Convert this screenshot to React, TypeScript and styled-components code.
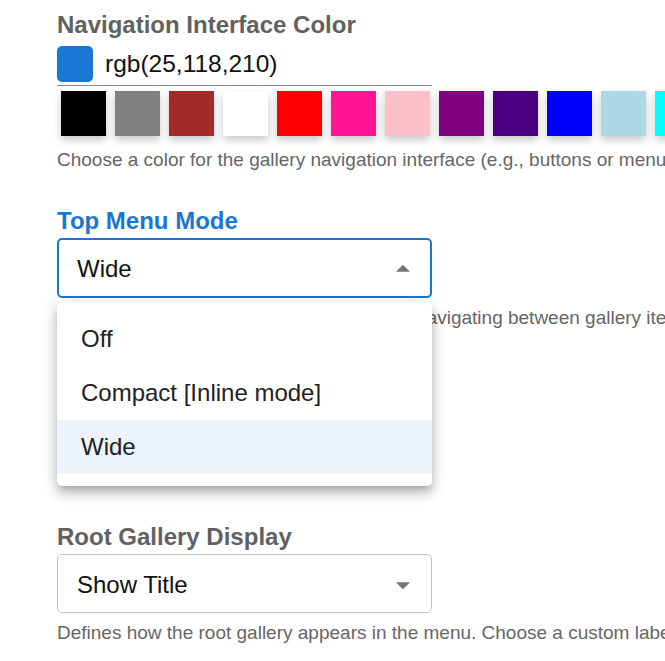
import styled, { createGlobalStyle } from "styled-components";

const GlobalStyle = createGlobalStyle`
  html, body {
    margin: 0;
    padding: 0;
    background: #ffffff;
    overflow: hidden;
  }
  body {
    font-family: "Liberation Sans", Arial, sans-serif;
  }
`;

const Page = styled.div`
  position: relative;
  width: 1000px;
  padding: 13px 0 0 57px;
`;

const Section = styled.section<{ $gap?: number }>`
  display: flex;
  flex-direction: column;
  margin-bottom: ${(p) => p.$gap ?? 0}px;
`;

const Label = styled.div<{ $active?: boolean }>`
  font-size: 24px;
  font-weight: 700;
  line-height: 24px;
  color: ${(p) => (p.$active ? "#1976d2" : "#616161")};
`;

const ColorRow = styled.div`
  display: flex;
  align-items: center;
  gap: 12px;
  margin-top: 9px;
  width: 375px;
  padding-bottom: 3px;
  border-bottom: 1px solid #8a8a8a;
`;

const CurrentColor = styled.div<{ $color: string }>`
  width: 36px;
  height: 36px;
  border-radius: 5px;
  background: ${(p) => p.$color};
`;

const ColorValue = styled.span`
  font-size: 24.5px;
  color: #111111;
`;

const SwatchRow = styled.div`
  display: flex;
  gap: 9px;
  padding: 5px 0 0 4px;
`;

const Swatch = styled.button<{ $color: string }>`
  flex: none;
  width: 45px;
  height: 45px;
  border: none;
  padding: 0;
  background: ${(p) => p.$color};
  box-shadow: 0 4px 8px rgba(0, 0, 0, 0.22);
  cursor: pointer;
`;

const Helper = styled.p<{ $top: number }>`
  margin: ${(p) => p.$top}px 0 0;
  font-size: 19px;
  line-height: 22px;
  color: #666666;
  white-space: nowrap;
`;

const SelectBox = styled.div<{ $focused?: boolean }>`
  box-sizing: border-box;
  width: 375px;
  height: ${(p) => (p.$focused ? 60 : 59)}px;
  margin-top: 5px;
  display: flex;
  align-items: center;
  justify-content: space-between;
  padding: 2px ${(p) => (p.$focused ? 10 : 11)}px 0 ${(p) => (p.$focused ? 18 : 19)}px;
  border: ${(p) => (p.$focused ? "2px solid #1976d2" : "1px solid #c4c4c4")};
  border-radius: 5px;
  font-size: 24px;
  color: #111111;
  cursor: pointer;
`;

const Menu = styled.ul`
  position: absolute;
  left: 57px;
  top: 302px;
  width: 375px;
  margin: 0;
  padding: 10px 0 12px;
  list-style: none;
  background: #ffffff;
  border-radius: 5px;
  box-shadow: 0 5px 6px -3px rgba(0, 0, 0, 0.2), 0 8px 12px 1px rgba(0, 0, 0, 0.14),
    0 3px 16px 2px rgba(0, 0, 0, 0.12);
`;

const MenuItem = styled.li<{ $selected?: boolean }>`
  height: 54px;
  display: flex;
  align-items: center;
  padding-left: 24px;
  font-size: 24px;
  color: #222222;
  background: ${(p) => (p.$selected ? "#edf3fa" : "transparent")};
  cursor: pointer;
`;

const Arrow = ({ up }: { up?: boolean }) => (
  <svg width="34" height="34" viewBox="0 0 24 24" fill="#757575">
    <path d={up ? "M7 14l5-5 5 5z" : "M7 10l5 5 5-5z"} />
  </svg>
);

const swatches = [
  "#000000",
  "#808080",
  "#a52a2a",
  "#ffffff",
  "#ff0000",
  "#ff1493",
  "#ffc0cb",
  "#800080",
  "#4b0082",
  "#0000ff",
  "#add8e6",
  "#00ffff",
];

const modes = ["Off", "Compact [Inline mode]", "Wide"];

function App() {
  const current = "rgb(25,118,210)";
  return (
    <Page>
      <GlobalStyle />
      <Section>
        <Label>Navigation Interface Color</Label>
        <ColorRow>
          <CurrentColor $color={current} />
          <ColorValue>{current}</ColorValue>
        </ColorRow>
        <SwatchRow>
          {swatches.map((c) => (
            <Swatch key={c} $color={c} aria-label={c} />
          ))}
        </SwatchRow>
        <Helper $top={13}>
          Choose a color for the gallery navigation interface (e.g., buttons or menus).
        </Helper>
      </Section>

      <Section $gap={196}>
        <Label $active style={{ marginTop: 38 }}>
          Top Menu Mode
        </Label>
        <SelectBox $focused>
          <span>Wide</span>
          <Arrow up />
        </SelectBox>
        <Helper $top={9}>
          Select the style of the top menu shown for navigating between gallery items.
        </Helper>
      </Section>

      <Section>
        <Label>Root Gallery Display</Label>
        <SelectBox>
          <span>Show Title</span>
          <Arrow />
        </SelectBox>
        <Helper $top={9}>
          Defines how the root gallery appears in the menu. Choose a custom label or hide it.
        </Helper>
      </Section>

      <Menu>
        {modes.map((m) => (
          <MenuItem key={m} $selected={m === "Wide"}>
            {m}
          </MenuItem>
        ))}
      </Menu>
    </Page>
  );
}

export default App;
